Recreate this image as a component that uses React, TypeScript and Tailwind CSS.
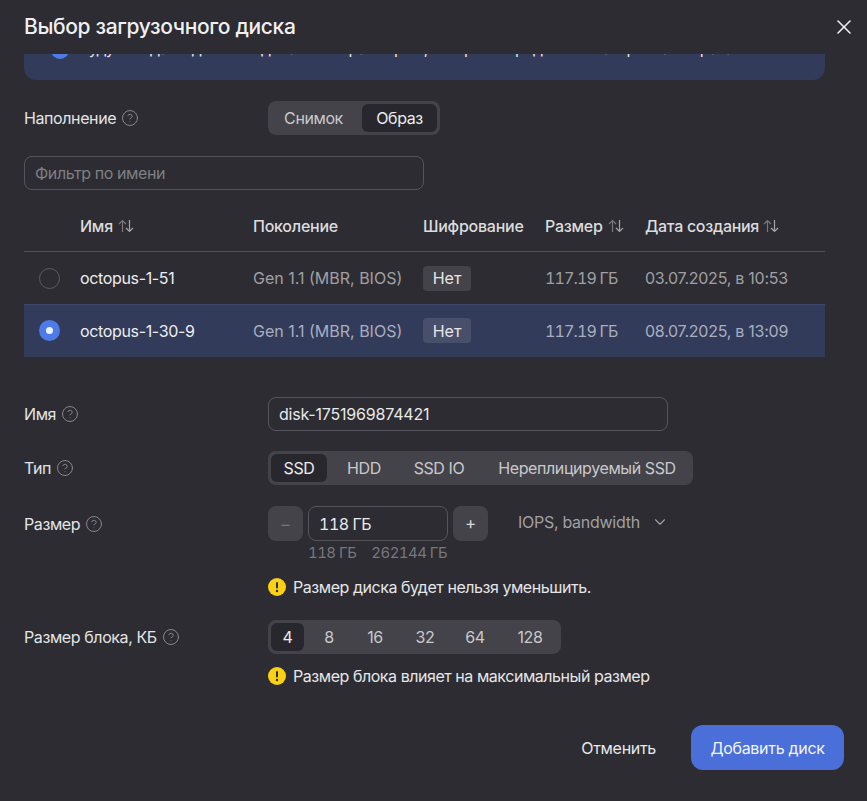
import { ChevronDown, CircleHelp, X } from "lucide-react"

const rows = [
  { name: "octopus-1-51", date: "03.07.2025, в 10:53", selected: false },
  { name: "octopus-1-30-9", date: "08.07.2025, в 13:09", selected: true },
]

function Help() {
  return <CircleHelp size={18} strokeWidth={1.25} className="shrink-0 text-[#8b8b90]" />
}

function SortIcon() {
  return (
    <svg width="18" height="16" viewBox="0 0 18 16" fill="none" className="shrink-0">
      <path d="M5.5 14V2.5M2 6l3.5-3.5L9 6" stroke="#77777c" strokeWidth="1.2" />
      <path d="M12.5 2v11.5M9 10l3.5 3.5L16 10" stroke="#a5a5a9" strokeWidth="1.2" />
    </svg>
  )
}

function Warn({ text }: { text: string }) {
  return (
    <div className="flex items-center gap-[7px] text-[16px] leading-5 tracking-[-0.45px] text-[#e6e6e8]">
      <svg width="18" height="18" viewBox="0 0 18 18" className="shrink-0">
        <circle cx="9" cy="9" r="9" fill="#fbd115" />
        <rect x="8" y="4" width="2" height="6.5" rx="1" fill="#2c2c32" />
        <circle cx="9" cy="13" r="1.2" fill="#2c2c32" />
      </svg>
      {text}
    </div>
  )
}

function Segmented({ items, active, cls }: { items: { label: string; w: string }[]; active: string; cls: string }) {
  return (
    <div className={`flex h-[34px] items-center rounded-lg bg-[#434349] px-[3px] ${cls}`}>
      {items.map((item) => (
        <div
          key={item.label}
          className={`flex h-[28px] items-center justify-center rounded-md text-[16px] tracking-[-0.4px] ${item.w} ${
            item.label === active ? "bg-[#27272d] text-[#ececee]" : "text-[#c9c9cc]"
          }`}
        >
          {item.label}
        </div>
      ))}
    </div>
  )
}

function Label({ text }: { text: string }) {
  return (
    <div className="flex items-center gap-[5px] text-[16px] tracking-[-0.4px] text-[#e4e4e6]">
      {text}
      <Help />
    </div>
  )
}

export default function App() {
  return (
    <div
      className="h-[801px] w-[867px] overflow-hidden bg-[#2c2c32]"
      style={{ fontFamily: "Inter, 'Noto Sans', sans-serif" }}
    >
      <header className="flex h-[54px] items-center justify-between pl-6 pr-[11px]">
        <h1 className="text-[21px] font-medium tracking-[-0.35px] text-[#f0f0f2]">Выбор загрузочного диска</h1>
        <X size={24} strokeWidth={1.6} className="text-[#eeeeef]" />
      </header>

      <div className="mx-6 w-[801px]">
        {/* баннер обрезан шапкой при прокрутке */}
        <div className="relative h-[26px] overflow-hidden rounded-b-xl bg-[#323b5a]">
          <div className="absolute -top-[16px] left-[27px] flex items-start gap-[10px] whitespace-nowrap text-[16px] leading-5 tracking-[-0.6px] text-[#e4e4e8]">
            <span className="mt-[3px] h-[18px] w-[18px] shrink-0 rounded-full bg-[#4e7be8]" />
            <span>
              Будут созданы диски с одинаковым размером, который определён в настройках образа
            </span>
          </div>
        </div>

        <div className="mt-[21px] flex items-center">
          <div className="w-[244px]">
            <Label text="Наполнение" />
          </div>
          <Segmented
            cls="w-[172px]"
            active="Образ"
            items={[
              { label: "Снимок", w: "w-[91px] pr-[6px]" },
              { label: "Образ", w: "w-[75px]" },
            ]}
          />
        </div>

        <div className="mt-[21px] flex h-[34px] w-[400px] items-center rounded-lg border border-[#55555b] px-[10px] pb-[1px] text-[16px] tracking-[-0.4px] text-[#7f7f84]">
          Фильтр по имени
        </div>

        <div className="mt-[19px] grid h-[43px] grid-cols-[56px_173px_170px_122px_100px_1fr] items-center border-b border-[#505056] pb-[9px] text-[16px] font-medium tracking-[-0.25px] text-[#dcdcde]">
          <div />
          <div className="flex items-center gap-[4px]">
            Имя <SortIcon />
          </div>
          <div>Поколение</div>
          <div className="whitespace-nowrap">Шифрование</div>
          <div className="flex items-center gap-[4px]">
            Размер <SortIcon />
          </div>
          <div className="flex items-center gap-[3px] whitespace-nowrap tracking-[-0.3px]">
            Дата создания <SortIcon />
          </div>
        </div>

        {rows.map((row) => (
          <div
            key={row.name}
            className={`grid grid-cols-[56px_173px_170px_122px_100px_1fr] items-center text-[16px] ${
              row.selected ? "h-[53px] border-t border-[#3f4868] bg-[#323b5a] pb-[1px]" : "h-[52px]"
            }`}
          >
            <div className="flex pl-[15px]">
              {row.selected ? (
                <span className="flex h-[21px] w-[21px] items-center justify-center rounded-full bg-[#4e7be8]">
                  <span className="h-[7px] w-[7px] rounded-full bg-[#eef2ff]" />
                </span>
              ) : (
                <span className="h-[21px] w-[21px] rounded-full border border-[#5d5d62]" />
              )}
            </div>
            <div className="tracking-[-0.35px] text-[#eeeef0]">{row.name}</div>
            <div className={`whitespace-nowrap ${row.selected ? "text-[#a9aebf]" : "text-[#a0a0a4]"}`}>
              Gen 1.1 (MBR, BIOS)
            </div>
            <div>
              <span
                className={`inline-flex h-[25px] w-[48px] items-center justify-center rounded text-[#e6e6e8] ${
                  row.selected ? "bg-[#484f6b]" : "bg-[#434349]"
                }`}
              >
                Нет
              </span>
            </div>
            <div className={`tabular-nums tracking-[-0.85px] ${row.selected ? "text-[#a9aebf]" : "text-[#a0a0a4]"}`}>
              117.19 ГБ
            </div>
            <div className={`whitespace-nowrap tracking-[-0.25px] ${row.selected ? "text-[#a9aebf]" : "text-[#a0a0a4]"}`}>
              {row.date}
            </div>
          </div>
        ))}

        <div className="mt-[40px] flex items-center">
          <div className="w-[244px]">
            <Label text="Имя" />
          </div>
          <div className="flex h-[34px] w-[400px] items-center rounded-lg border border-[#55555b] px-[10px] text-[16px] tracking-[-0.2px] text-[#e8e8ea]">
            disk-1751969874421
          </div>
        </div>

        <div className="mt-[20px] flex items-center">
          <div className="w-[244px]">
            <Label text="Тип" />
          </div>
          <Segmented
            cls="w-[425px]"
            active="SSD"
            items={[
              { label: "SSD", w: "w-[56px]" },
              { label: "HDD", w: "w-[74px]" },
              { label: "SSD IO", w: "w-[76px]" },
              { label: "Нереплицируемый SSD", w: "w-[213px] pl-[7px]" },
            ]}
          />
        </div>

        <div className="mt-[21px] flex items-start">
          <div className="flex h-[35px] w-[244px] items-center">
            <Label text="Размер" />
          </div>
          <div>
            <div className="flex items-center">
              <div className="flex h-[35px] w-[35px] items-center justify-center rounded-lg bg-[#434349] text-[16px] text-[#77777c]">
                –
              </div>
              <div className="mx-[5px] flex h-[35px] w-[140px] items-center rounded-lg border border-[#55555b] px-[10px] text-[16px] tabular-nums tracking-[-0.5px] text-[#e8e8ea]">
                118 ГБ
              </div>
              <div className="flex h-[35px] w-[35px] items-center justify-center rounded-lg bg-[#434349] text-[17px] text-[#d8d8da]">
                +
              </div>
              <div className="ml-[30px] flex -translate-y-[2px] items-center gap-[11px] text-[16px] tracking-[-0.28px] text-[#a0a0a4]">
                IOPS, bandwidth
                <ChevronDown size={18} strokeWidth={1.5} />
              </div>
            </div>
            <div className="mt-[3px] ml-[40px] flex gap-[15px] text-[15px] leading-[18px] tabular-nums tracking-[-0.55px] text-[#77777c]">
              <span>118 ГБ</span>
              <span>262144 ГБ</span>
            </div>
            <div className="mt-[15px]">
              <Warn text="Размер диска будет нельзя уменьшить." />
            </div>
          </div>
        </div>

        <div className="mt-[23px] flex items-start">
          <div className="flex h-[34px] w-[244px] items-center">
            <Label text="Размер блока, КБ" />
          </div>
          <div>
            <Segmented
              cls="w-[293px]"
              active="4"
              items={[
                { label: "4", w: "w-[33px]" },
                { label: "8", w: "ml-[7px] w-[36px]" },
                { label: "16", w: "w-[56px]" },
                { label: "32", w: "w-[44px]" },
                { label: "64", w: "w-[56px]" },
                { label: "128", w: "w-[54px]" },
              ]}
            />
            <div className="mt-[12px]">
              <Warn text="Размер блока влияет на максимальный размер" />
            </div>
          </div>
        </div>
      </div>

      <div className="mt-[39px] flex items-center justify-end pr-[23px]">
        <span className="text-[16px] tracking-[-0.3px] text-[#e8e8ea]">Отменить</span>
        <button className="ml-[35px] h-[45px] w-[153px] rounded-xl bg-[#4a6fd8] text-[16px] tracking-[-0.3px] text-[#f2f5ff]">
          Добавить диск
        </button>
      </div>
    </div>
  )
}
